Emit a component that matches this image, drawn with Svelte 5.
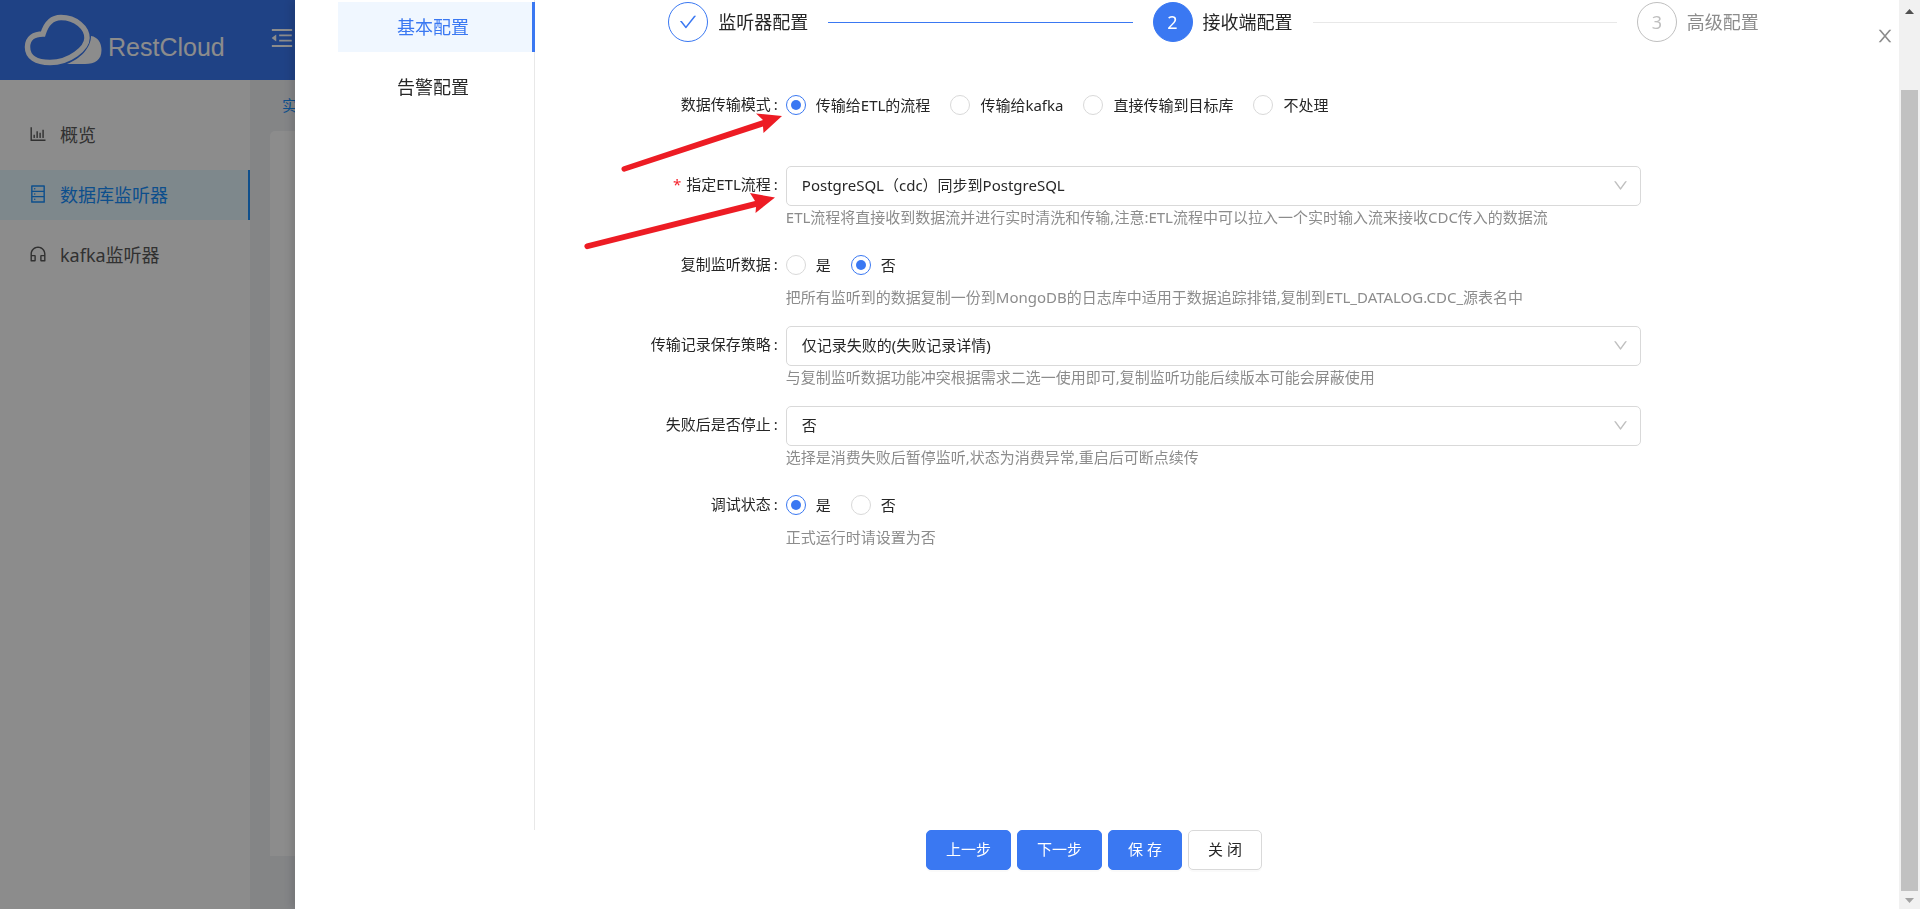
<script>
  const icons = {
    chart:
      'M888 792H200V168c0-4.4-3.6-8-8-8h-56c-4.4 0-8 3.6-8 8v688c0 4.4 3.6 8 8 8h752c4.4 0 8-3.6 8-8v-56c0-4.4-3.6-8-8-8zm-600-80h56c4.4 0 8-3.6 8-8V560c0-4.4-3.6-8-8-8h-56c-4.4 0-8 3.6-8 8v144c0 4.4 3.6 8 8 8zm152 0h56c4.4 0 8-3.6 8-8V384c0-4.4-3.6-8-8-8h-56c-4.4 0-8 3.6-8 8v320c0 4.4 3.6 8 8 8zm152 0h56c4.4 0 8-3.6 8-8V462c0-4.4-3.6-8-8-8h-56c-4.4 0-8 3.6-8 8v242c0 4.4 3.6 8 8 8zm152 0h56c4.4 0 8-3.6 8-8V304c0-4.4-3.6-8-8-8h-56c-4.4 0-8 3.6-8 8v400c0 4.4 3.6 8 8 8z',
    database:
      'M832 64H192c-17.7 0-32 14.3-32 32v832c0 17.7 14.3 32 32 32h640c17.7 0 32-14.3 32-32V96c0-17.7-14.3-32-32-32zm-600 72h560v208H232V136zm560 480H232V408h560v208zm0 272H232V680h560v208zM304 240a40 40 0 1 0 80 0 40 40 0 1 0-80 0zm0 272a40 40 0 1 0 80 0 40 40 0 1 0-80 0zm0 272a40 40 0 1 0 80 0 40 40 0 1 0-80 0z',
    headset:
      'M512 128c-212.1 0-384 171.9-384 384v360c0 13.3 10.7 24 24 24h184c35.3 0 64-28.7 64-64V624c0-35.3-28.7-64-64-64H200v-48c0-172.3 139.7-312 312-312s312 139.7 312 312v48H688c-35.3 0-64 28.7-64 64v208c0 35.3 28.7 64 64 64h184c13.3 0 24-10.7 24-24V512c0-212.1-171.9-384-384-384zM328 632v192H200V632h128zm496 192H696V632h128v192z',
    fold:
      'M408 442h480c4.4 0 8-3.6 8-8v-56c0-4.4-3.6-8-8-8H408c-4.4 0-8 3.6-8 8v56c0 4.4 3.6 8 8 8zm-8 204c0 4.4 3.6 8 8 8h480c4.4 0 8-3.6 8-8v-56c0-4.4-3.6-8-8-8H408c-4.4 0-8 3.6-8 8v56zm504-486H120c-4.4 0-8 3.6-8 8v56c0 4.4 3.6 8 8 8h784c4.4 0 8-3.6 8-8v-56c0-4.4-3.6-8-8-8zm0 632H120c-4.4 0-8 3.6-8 8v56c0 4.4 3.6 8 8 8h784c4.4 0 8-3.6 8-8v-56c0-4.4-3.6-8-8-8zM115.4 518.9L271.7 642c5.8 4.6 14.4.5 14.4-6.9V388.9c0-7.4-8.5-11.5-14.4-6.9L115.4 505.1a8.74 8.74 0 0 0 0 13.8z',
    check:
      'M912 190h-69.9c-9.8 0-19.1 4.5-25.1 12.2L404.7 724.5 207 474a32 32 0 0 0-25.1-12.2H112c-6.7 0-10.4 7.7-6.3 12.9l273.9 347c12.8 16.2 37.4 16.2 50.3 0l488.4-618.9c4.1-5.1.4-12.8-6.3-12.8z',
    close:
      'M563.8 512l262.5-312.9c4.4-5.2.7-13.1-6.1-13.1h-79.8c-4.7 0-9.2 2.1-12.3 5.7L511.6 449.8 295.1 191.7c-3-3.6-7.5-5.7-12.3-5.7H203c-6.8 0-10.5 7.9-6.1 13.1L459.4 512 196.9 824.9A7.95 7.95 0 0 0 203 838h79.8c4.7 0 9.2-2.1 12.3-5.7l216.5-258.1 216.5 258.1c3 3.6 7.5 5.7 12.3 5.7h79.8c6.8 0 10.5-7.9 6.1-13.1L563.8 512z',
    down:
      'M884 256h-75c-5.1 0-9.9 2.5-12.9 6.6L512 654.2 227.9 262.6c-3-4.1-7.8-6.6-12.9-6.6h-75c-6.5 0-10.3 7.4-6.5 12.7l352.6 486.1c12.8 17.6 39 17.6 51.7 0l352.6-486.1c3.9-5.3.1-12.7-6.4-12.7z',
  };

  const navItems = [
    { label: '概览', icon: 'chart' },
    { label: '数据库监听器', icon: 'database', active: true },
    { label: 'kafka监听器', icon: 'headset' },
  ];

  const tabs = ['基本配置', '告警配置'];
  let activeTab = $state('基本配置');

  const steps = [
    { title: '监听器配置', status: 'finish' },
    { title: '接收端配置', status: 'process' },
    { title: '高级配置', status: 'wait' },
  ];

  const fields = [
    {
      name: 'transferMode',
      label: '数据传输模式',
      type: 'radio',
      options: ['传输给ETL的流程', '传输给kafka', '直接传输到目标库', '不处理'],
    },
    {
      name: 'etlFlow',
      label: '指定ETL流程',
      required: true,
      type: 'select',
      options: ['PostgreSQL（cdc）同步到PostgreSQL'],
      help: 'ETL流程将直接收到数据流并进行实时清洗和传输,注意:ETL流程中可以拉入一个实时输入流来接收CDC传入的数据流',
    },
    {
      name: 'copyData',
      label: '复制监听数据',
      type: 'radio',
      options: ['是', '否'],
      help: '把所有监听到的数据复制一份到MongoDB的日志库中适用于数据追踪排错,复制到ETL_DATALOG.CDC_源表名中',
    },
    {
      name: 'savePolicy',
      label: '传输记录保存策略',
      type: 'select',
      options: ['仅记录失败的(失败记录详情)'],
      help: '与复制监听数据功能冲突根据需求二选一使用即可,复制监听功能后续版本可能会屏蔽使用',
    },
    {
      name: 'stopOnFail',
      label: '失败后是否停止',
      type: 'select',
      options: ['否', '是'],
      help: '选择是消费失败后暂停监听,状态为消费异常,重启后可断点续传',
    },
    {
      name: 'debug',
      label: '调试状态',
      type: 'radio',
      options: ['是', '否'],
      help: '正式运行时请设置为否',
    },
  ];

  let values = $state({
    transferMode: '传输给ETL的流程',
    etlFlow: 'PostgreSQL（cdc）同步到PostgreSQL',
    copyData: '否',
    savePolicy: '仅记录失败的(失败记录详情)',
    stopOnFail: '否',
    debug: '是',
  });
</script>

{#snippet icon(name)}
  <svg class="icon icon-{name}" viewBox="0 0 1024 1024" aria-hidden="true">
    <path d={icons[name]} />
  </svg>
{/snippet}

<div class="page">
  <header class="header">
    <svg class="logo" viewBox="24 12 80 56" aria-hidden="true">
      <path
        class="logo-line"
        d="M43 34C46 24 52 17.5 61 17.5C76 17.5 87 28 87 38C87 48 70 62.5 50 62.5C36 62.5 27.5 57 27.5 47C27.5 38 34 34 43 34Z"
      />
      <path d="M91 36C98 37 101.5 43 101.5 50C101.5 60 95 64 85 64L67 64C80 59 91 48 91 36Z" />
    </svg>
    <span class="brand">RestCloud</span>
    <button class="fold-btn" aria-label="menu">{@render icon('fold')}</button>
  </header>
  <div class="page-body">
    <nav class="sidebar">
      {#each navItems as item}
        <a href="#top" class="nav-item" class:active={item.active}>
          {@render icon(item.icon)}
          <span>{item.label}</span>
        </a>
      {/each}
    </nav>
    <div class="content">
      <a class="crumb" href="#top">实</a>
      <div class="panel"></div>
    </div>
  </div>
</div>

<div class="mask"></div>

<div class="drawer">
  <div class="drawer-main">
    <button class="close-btn" aria-label="close">{@render icon('close')}</button>
    <div class="drawer-body">
      <div class="tabs">
        {#each tabs as tab}
          <button class="tab" class:active={tab === activeTab} onclick={() => (activeTab = tab)}>{tab}</button>
        {/each}
      </div>
      <div class="config">
        <div class="steps">
          {#each steps as step, i}
            <div class="step {step.status}">
              <span class="step-icon">
                {#if step.status === 'finish'}
                  {@render icon('check')}
                {:else}
                  {i + 1}
                {/if}
              </span>
              <span class="step-title">{step.title}</span>
              {#if i < steps.length - 1}
                <span class="step-line"></span>
              {/if}
            </div>
          {/each}
        </div>

        <form class="form">
          {#each fields as field}
            <div class="form-row">
              {#if field.type === 'select'}
                <label class="form-label" class:required={field.required} for={field.name}>{field.label}</label>
              {:else}
                <span class="form-label" id="{field.name}-label">{field.label}</span>
              {/if}
              <div class="form-control">
                {#if field.type === 'select'}
                  <div class="select-box">
                    <select id={field.name} bind:value={values[field.name]}>
                      {#each field.options as option}
                        <option value={option}>{option}</option>
                      {/each}
                    </select>
                    {@render icon('down')}
                  </div>
                {:else}
                  <div class="radio-group" role="radiogroup" aria-labelledby="{field.name}-label">
                    {#each field.options as option}
                      <label class="radio">
                        <input type="radio" name={field.name} value={option} bind:group={values[field.name]} />
                        <span>{option}</span>
                      </label>
                    {/each}
                  </div>
                {/if}
                {#if field.help}
                  <div class="help">{field.help}</div>
                {/if}
              </div>
            </div>
          {/each}
          <svg class="marks" viewBox="0 0 220 170" aria-hidden="true">
            <path d="M51 80.5L191 34L184 27.5L210 30L191.5 47L191 40.5L53 85.5A2.7 2.7 0 0 1 51 80.5Z" />
            <path d="M14.5 157.5L183 115L178 107L203 111.5L183.5 127L184 121L16 163A2.8 2.8 0 0 1 14.5 157.5Z" />
          </svg>
        </form>
      </div>
    </div>
    <div class="drawer-footer">
      <button class="btn primary">上一步</button>
      <button class="btn primary">下一步</button>
      <button class="btn primary">保 存</button>
      <button class="btn">关 闭</button>
    </div>
  </div>
  <div class="scrollbar">
    <svg viewBox="0 0 9 5" aria-hidden="true"><path fill="#505050" d="M0 5L4.5 0L9 5Z" /></svg>
    <div class="thumb"></div>
    <svg viewBox="0 0 9 5" aria-hidden="true"><path fill="#a3a3a3" d="M0 0L4.5 5L9 0Z" /></svg>
  </div>
</div>

<style>
  :global(body) {
    font-family: 'Noto Sans', 'Noto Sans CJK SC', sans-serif;
    font-size: 15px;
    font-weight: 400;
    color: #262626;
    overflow: hidden;
  }

  button,
  select {
    font: inherit;
    color: inherit;
    cursor: pointer;
  }

  a {
    text-decoration: none;
  }

  .icon {
    display: block;
    width: 1em;
    height: 1em;
    fill: currentColor;
    flex-shrink: 0;
  }

  .page {
    display: flex;
    flex-direction: column;
    height: 100vh;
  }

  .header {
    display: flex;
    align-items: center;
    height: 80px;
    padding-left: 24px;
    background: #3a78f2;
    color: #fff;
  }

  .logo {
    width: 80px;
    height: 56px;
    fill: #fff;
  }

  .logo-line {
    fill: none;
    stroke: #fff;
    stroke-width: 5.5;
  }

  .brand {
    margin: 14px 44px 0 4px;
    font-family: 'Liberation Sans', sans-serif;
    font-size: 25px;
  }

  .fold-btn {
    margin-bottom: 4px;
    padding: 0;
    border: none;
    background: none;
    color: #fff;
    font-size: 26px;
  }

  .page-body {
    flex: 1;
    display: flex;
  }

  .sidebar {
    display: flex;
    flex-direction: column;
    gap: 10px;
    width: 250px;
    padding-top: 30px;
    background: #fff;
    flex-shrink: 0;
  }

  .nav-item {
    display: flex;
    align-items: center;
    gap: 12px;
    box-sizing: border-box;
    height: 50px;
    padding: 0 0 2px 28px;
    font-size: 18px;
    color: #595959;
  }

  .nav-item .icon {
    font-size: 20px;
  }

  .nav-item.active {
    background: #e6f7ff;
    border-right: 2px solid #1890ff;
    color: #1890ff;
  }

  .content {
    flex: 1;
    display: flex;
    flex-direction: column;
    padding: 0 20px 53px;
    background: #f0f2f5;
  }

  .crumb {
    padding-left: 12px;
    line-height: 51px;
    color: #1890ff;
  }

  .panel {
    flex: 1;
    border-radius: 5px 5px 0 0;
    background: #fff;
  }

  .mask {
    position: fixed;
    inset: 0;
    background: rgba(0, 0, 0, 0.45);
  }

  .drawer {
    position: fixed;
    inset: 0 0 0 295px;
    display: flex;
    background: #fff;
    box-shadow: -3px 0 10px rgba(0, 0, 0, 0.15);
  }

  .drawer-main {
    position: relative;
    flex: 1;
    display: flex;
    flex-direction: column;
  }

  .close-btn {
    position: absolute;
    top: 26px;
    right: 4px;
    padding: 0;
    border: none;
    background: none;
    color: #8c8c8c;
    font-size: 20px;
  }

  .drawer-body {
    flex: 1;
    display: flex;
    padding: 0 44px 0 43px;
  }

  .tabs {
    display: flex;
    flex-direction: column;
    gap: 10px;
    width: 196px;
    padding-top: 2px;
    border-right: 1px solid #e8e8e8;
    flex-shrink: 0;
  }

  .tab {
    height: 50px;
    margin-right: -1px;
    padding: 0 4px 2px 0;
    border: none;
    border-right: 3px solid transparent;
    background: none;
    font-size: 18px;
  }

  .tab.active {
    border-right-color: #3a78f2;
    background: #f0f7ff;
    color: #3a78f2;
  }

  .config {
    flex: 1;
    margin-left: 37px;
  }

  .steps {
    display: flex;
    gap: 20px;
    width: 85%;
    margin: 0 auto;
    padding-top: 2px;
  }

  .step {
    flex: 1;
    display: flex;
    align-items: center;
    gap: 10px;
    font-size: 18px;
    white-space: nowrap;
  }

  .step:last-child {
    flex: none;
  }

  .step-icon {
    display: flex;
    align-items: center;
    justify-content: center;
    box-sizing: border-box;
    width: 40px;
    height: 40px;
    border: 1px solid #3a78f2;
    border-radius: 50%;
    color: #3a78f2;
    flex-shrink: 0;
  }

  .step-icon .icon {
    font-size: 20px;
  }

  .step-title {
    padding-bottom: 2px;
  }

  .process .step-icon {
    background: #3a78f2;
    color: #fff;
  }

  .wait .step-icon {
    border-color: #bfbfbf;
    color: #bfbfbf;
  }

  .wait .step-title {
    color: #8c8c8c;
  }

  .step-line {
    flex: 1;
    height: 1px;
    margin-left: 10px;
    background: #e8e8e8;
  }

  .finish .step-line {
    background: #3a78f2;
  }

  .form {
    position: relative;
    display: flex;
    flex-direction: column;
    gap: 16px;
    padding-top: 44px;
  }

  .form-row {
    display: grid;
    grid-template-columns: 4fr 16fr 4fr;
    min-height: 64px;
  }

  .form-label {
    padding-right: 8px;
    line-height: 36px;
    text-align: right;
    white-space: nowrap;
  }

  .form-label::after {
    content: ':';
    margin-left: 3px;
  }

  .form-label.required::before {
    content: '*';
    margin-right: 5px;
    color: #f5222d;
  }

  .select-box {
    position: relative;
  }

  .select-box select {
    display: block;
    box-sizing: border-box;
    width: 100%;
    height: 40px;
    padding: 0 40px 2px 15px;
    border: 1px solid #d9d9d9;
    border-radius: 5px;
    background: #fff;
    appearance: none;
  }

  .icon-down {
    position: absolute;
    top: 11px;
    right: 12px;
    font-size: 17px;
    color: #bfbfbf;
    pointer-events: none;
  }

  .radio-group {
    display: flex;
    align-items: center;
    gap: 20px;
    height: 38px;
    padding-bottom: 2px;
  }

  .radio {
    display: flex;
    align-items: center;
    gap: 10px;
    cursor: pointer;
  }

  .radio span {
    padding-bottom: 2px;
  }

  .radio input {
    display: grid;
    place-items: center;
    box-sizing: border-box;
    width: 20px;
    height: 20px;
    margin: 0;
    border: 1px solid #d9d9d9;
    border-radius: 50%;
    appearance: none;
  }

  .radio input:checked {
    border-color: #3a78f2;
  }

  .radio input:checked::before {
    content: '';
    width: 10px;
    height: 10px;
    border-radius: 50%;
    background: #3a78f2;
  }

  .help {
    line-height: 22px;
    color: #8c8c8c;
  }

  .marks {
    position: absolute;
    top: 44px;
    left: 0;
    width: 220px;
    height: 170px;
    fill: #ed1c24;
    pointer-events: none;
  }

  .drawer-footer {
    display: flex;
    justify-content: center;
    gap: 6px;
    padding: 0 6px 39px 0;
  }

  .btn {
    height: 40px;
    padding: 0 19px 3px;
    border: 1px solid #d9d9d9;
    border-radius: 5px;
    background: #fff;
    box-shadow: 0 2px 0 rgba(0, 0, 0, 0.02);
  }

  .btn.primary {
    border-color: #3a78f2;
    background: #3a78f2;
    color: #fff;
  }

  .scrollbar {
    display: flex;
    flex-direction: column;
    align-items: center;
    width: 21px;
    padding: 9px 0 6px;
    box-sizing: border-box;
    background: #f1f1f1;
  }

  .scrollbar svg {
    width: 9px;
    height: 5px;
  }

  .thumb {
    flex: 1;
    width: 17px;
    margin: 76px 0 7px;
    background: #c1c1c1;
  }
</style>
